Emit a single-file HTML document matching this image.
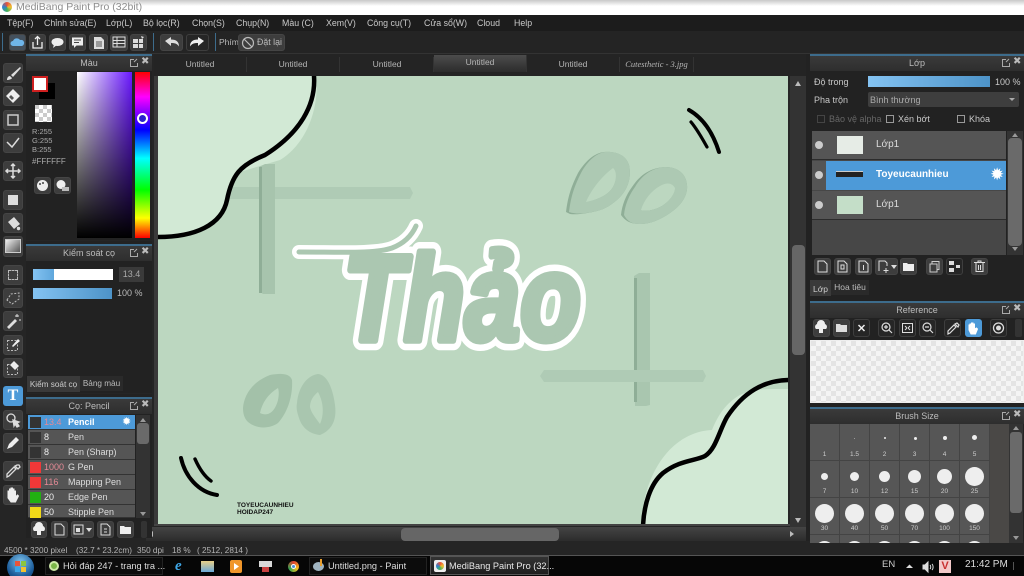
<!DOCTYPE html>
<html><head><meta charset="utf-8"><style>
html,body{margin:0;padding:0;width:1024px;height:576px;overflow:hidden;background:#252525}
body{font-family:"Liberation Sans","DejaVu Sans",sans-serif;font-size:9px;color:#c8c8c8;position:relative}
div,span{position:absolute;box-sizing:border-box;white-space:nowrap}
svg{position:absolute;overflow:visible}
.b{background:#3d3d3d;border:1px solid #454545;border-radius:3px}
.d{background:#262626;border:1px solid #3e3e3e;border-radius:3px}
.h{background:linear-gradient(#3a3a3a,#2e2e2e);border-top:2px solid #3d6c8c;text-align:center;color:#bcbcbc;font-size:9px;line-height:15px;height:17px}
.m{top:16px;font-size:8.8px;color:#c9c9c9;line-height:15px}
.t{top:57px;height:15px;line-height:15px;text-align:center;width:93px;font-size:8.5px;color:#b5b5b5;border-right:1px solid #333;background:#242424}
.r{left:28px;width:107px;height:15px;background:#555;border-bottom:1px solid #333;font-size:9px;line-height:15px;color:#ddd}
.s{left:2px;top:2px;width:11px;height:11px;background:#333}
.n{left:16px;color:#eee}.l{left:40px}
.c{width:30px;height:37px;background:#565656;border-right:1px solid #444;border-bottom:1px solid #444}
.c i{position:absolute;background:#eee;border-radius:50%}
.c b{position:absolute;left:0;width:29px;text-align:center;font-weight:normal;font-size:6.5px;bottom:2px;color:#ccc}
.x{font-size:10px;color:#bbb;font-weight:bold}
.st{top:546px;font-size:8.2px;line-height:10px;color:#b5b5b5}
</style></head><body>

<!-- title -->
<div style="left:0;top:0;width:1024px;height:15px;background:linear-gradient(#c8c8c8,#fff 6px)"></div>
<div style="left:2px;top:2px;width:10px;height:10px;border-radius:50%;background:conic-gradient(#e8503a,#f0c030,#40b060,#3080d0,#e8503a)"></div>
<div style="left:16px;top:1px;font-size:10.5px;line-height:13px;color:#8e8e8e;text-shadow:0 0 2px #fff">MediBang Paint Pro (32bit)</div>

<!-- menu -->
<div style="left:0;top:15px;width:1024px;height:16px;background:#1c1c1c"></div>
<span class="m" style="left:7px">Tệp(F)</span><span class="m" style="left:44px">Chỉnh sửa(E)</span><span class="m" style="left:106px">Lớp(L)</span><span class="m" style="left:143px">Bộ lọc(R)</span><span class="m" style="left:192px">Chọn(S)</span><span class="m" style="left:236px">Chụp(N)</span><span class="m" style="left:282px">Màu (C)</span><span class="m" style="left:326px">Xem(V)</span><span class="m" style="left:367px">Công cụ(T)</span><span class="m" style="left:424px">Cửa sổ(W)</span><span class="m" style="left:477px">Cloud</span><span class="m" style="left:514px">Help</span>

<!-- toolbar -->
<div style="left:0;top:31px;width:1024px;height:23px;background:#242424;border-bottom:1px solid #333"></div>
<div style="left:2px;top:33px;width:1px;height:18px;background:#3d6c8c"></div>
<div style="left:153px;top:33px;width:1px;height:18px;background:#3d6c8c"></div>
<div style="left:215px;top:33px;width:1px;height:18px;background:#3d6c8c"></div>
<div class="b" style="left:9px;top:34px;width:17px;height:17px;background:#44505c"></div>
<svg style="left:9px;top:34px" width="17" height="17"><path d="M4 12a2.500 2.500 0 0 1 0-5 4 4 0 0 1 7-1 3 3 0 0 1 2 6z" fill="#6fb6ea"/></svg>
<div class="b" style="left:29px;top:34px;width:17px;height:17px"></div>
<svg style="left:29px;top:34px" width="17" height="17" fill="none" stroke="#eee" stroke-width="1.300"><path d="M4 8v6h9V8M8.500 11V3M6 5l2.500-2.500L11 5"/></svg>
<div class="b" style="left:49px;top:34px;width:17px;height:17px"></div>
<svg style="left:49px;top:34px" width="17" height="17"><ellipse cx="8.500" cy="8" rx="6" ry="4" fill="#eee"/><path d="M5 10l-1 4 4-3z" fill="#eee"/></svg>
<div class="b" style="left:69px;top:34px;width:17px;height:17px"></div>
<svg style="left:69px;top:34px" width="17" height="17"><rect x="3" y="3.500" width="11" height="8" fill="#eee"/><path d="M5 11v3l3-3z" fill="#eee"/><path d="M5 6h7M5 8.500h5" stroke="#444"/></svg>
<div class="b" style="left:89px;top:34px;width:19px;height:17px"></div>
<svg style="left:89px;top:34px" width="19" height="17"><path d="M5 3h7l3 3v9H5z" fill="#ddd"/><path d="M7 8h6M7 10h6M7 12h6" stroke="#555"/></svg>
<div class="b" style="left:110px;top:34px;width:18px;height:17px"></div>
<svg style="left:110px;top:34px" width="18" height="17" fill="none" stroke="#ddd"><rect x="3" y="3" width="12" height="10"/><path d="M3 6.500h12M3 9.500h12M7 3v10"/></svg>
<div class="b" style="left:130px;top:34px;width:17px;height:17px"></div>
<svg style="left:130px;top:34px" width="17" height="17" fill="#ddd"><rect x="3" y="5" width="5" height="4"/><rect x="9" y="5" width="4" height="4"/><rect x="3" y="10" width="5" height="4"/><rect x="9" y="10" width="4" height="4"/><path d="M11 2l3 1-2 2z"/></svg>
<div class="b" style="left:160px;top:34px;width:23px;height:17px"></div>
<svg style="left:160px;top:34px" width="23" height="17"><path d="M5 7l6-4v2.500c5 0 8 2 8 7-2-3-4-3.500-8-3.500V12z" fill="#ddd"/></svg>
<div class="d" style="left:186px;top:34px;width:23px;height:17px"></div>
<svg style="left:186px;top:34px" width="23" height="17"><path d="M18 7l-6-4v2.500c-5 0-8 2-8 7 2-3 4-3.500 8-3.500V12z" fill="#eee"/></svg>
<span style="left:219px;top:35px;font-size:8.500px;line-height:14px;color:#bbb">Phím</span>
<div class="b" style="left:238px;top:34px;width:47px;height:17px"></div>
<svg style="left:241px;top:36px" width="14" height="14" fill="none" stroke="#bbb" stroke-width="1.200"><circle cx="7" cy="7" r="5.500"/><path d="M3 3l8 8"/></svg>
<span style="left:257px;top:35px;font-size:8.800px;line-height:14px;color:#bbb">Đặt lại</span>

<!-- doc tabs -->
<div style="left:154px;top:54px;width:656px;height:22px;background:#242424"></div>
<div class="t" style="left:154px">Untitled</div><div class="t" style="left:247px">Untitled</div><div class="t" style="left:341px">Untitled</div>
<div class="t" style="left:434px;top:55px;height:17px;background:linear-gradient(#4c4c4c,#2c2c2c)">Untitled</div>
<div class="t" style="left:527px">Untitled</div>
<div class="t" style="left:620px;width:74px;font-family:'Liberation Serif',serif;font-style:italic">Cutesthetic - 3.jpg</div>

<!-- canvas -->
<svg style="left:158px;top:76px;overflow:hidden" width="630" height="448" viewBox="158 76 630 448">
<rect x="158" y="76" width="630" height="448" fill="#bcd7c0"/>
<path d="M158 76H316C320 110 305 145 280 160L240 172C230 180 228 195 226 210 218 230 190 238 158 238Z" fill="#d2e9d5"/>
<path d="M642 524C642 480 668 432 712 430 718 415 726 403 740 395 755 388 770 389 788 389V524Z" fill="#d2e9d5"/>
<path d="M228 187h182l3 6-3 6H228z" fill="#afcbb5"/>
<path d="M259 167l6-3h10v130h-12l-4-3z" fill="#a7c4ad"/>
<rect x="259" y="167" width="3" height="126" fill="#8fae97"/>
<path d="M634 276l5-3h11v132l-4 1h-11z" fill="#a9c6af"/>
<rect x="634" y="278" width="3" height="124" fill="#8fae97"/>
<path d="M540 376l4-6h159l3 6-3 6H544z" fill="#afcbb5"/>
<g fill-rule="evenodd">
<path d="M566 212C568 195 572 185 578 173 586 160 595 153 604 152 616 151 626 155 629 165 632 178 627 190 620 197 612 205 605 209 597 211 588 213 578 215 570 214Z M585 203C596 200 606 196 611 190 616 184 619 172 613 167 602 175 590 190 585 203Z" fill="#8fae97"/>
<path d="M569 212C571 195 575 185 581 173 588 160 597 153 605 152 616 151 626 155 629 165 632 178 627 190 620 197 612 205 605 209 597 211 588 213 578 215 569 212Z M586 202C596 200 606 196 611 190 616 184 618 172 613 168 602 176 591 190 586 202Z" fill="#adc9b3"/>
<path d="M621 215C622 205 626 195 632 187 640 175 650 168 665 167 677 167 686 173 687 185 688 195 682 205 670 213 660 220 650 224 640 224 632 224 626 222 621 215Z M640 210C646 212 655 210 662 206 670 201 676 193 675 187 672 182 667 181 660 185 650 190 643 200 640 210Z" fill="#8fae97"/>
<path d="M624 215C625 205 629 195 635 187 642 175 652 168 665 167 677 167 686 173 687 185 688 195 682 205 670 213 660 220 650 224 640 224 632 224 628 222 624 215Z M641 210C646 212 655 210 662 206 670 201 675 193 675 188 672 183 667 182 660 186 651 191 644 200 641 210Z" fill="#adc9b3"/>
<path d="M243 408C244 395 252 382 270 375 280 373 290 373 292 380 293 395 288 412 278 423 268 430 255 428 248 422 244 418 243 413 243 408Z M260 413C268 417 275 412 278 400 279 395 279 391 278 388 268 394 262 403 260 413Z" fill="#a3c1a9"/>
<path d="M297 403C298 390 305 376 318 374 328 375 333 390 335 405 337 420 332 430 320 435 310 434 302 428 299 418 297 412 296 408 297 403Z M310 407C311 412 314 416 320 424 324 415 324 403 318 392 313 396 310 401 310 407Z" fill="#a9c6af"/>
</g>
<g fill="none" stroke="#000" stroke-linecap="round">
<path d="M314 76C316 105 300 133 265 155 240 165 232 175 227 200 222 225 195 237 158 237" stroke-width="4.500"/>
<path d="M790 380C763 380 743 393 727 417 719 431 716 449 705 456 695 461 680 460 663 473 650 484 644 505 643 526" stroke-width="4.500"/>
<path d="M689 110C703 118 713 133 719 152" stroke-width="4"/>
<path d="M691 122C697 129 702 138 707 147" stroke-width="3.200"/>
<path d="M181 458C185 476 198 492 217 495" stroke-width="4"/>
<path d="M195 459C199 468 204 476 211 481" stroke-width="3.400"/>
</g>
<g font-family="Liberation Sans,sans-serif" font-style="italic" font-weight="bold" font-size="122" stroke-linejoin="round">
<path d="M299 252C340 252 375 254 392 248 405 243 412 235 416 226" fill="none" stroke="#fff" stroke-width="14" stroke-linecap="round"/>
<text x="343" y="340" textLength="238" lengthAdjust="spacingAndGlyphs" fill="#fff" stroke="#fff" stroke-width="20">Thảo</text>
<text x="343" y="340" textLength="238" lengthAdjust="spacingAndGlyphs" fill="#abc7b1" stroke="#abc7b1" stroke-width="7">Thảo</text>
<path d="M299 252C340 252 375 254 392 248 405 243 412 235 416 226" fill="none" stroke="#abc7b1" stroke-width="5" stroke-linecap="round"/>
</g>
<text x="237" y="507" font-family="Liberation Sans,sans-serif" font-weight="bold" font-size="6.500" fill="#111">TOYEUCAUNHIEU</text>
<text x="237" y="514" font-family="Liberation Sans,sans-serif" font-weight="bold" font-size="6.500" fill="#111">HOIDAP247</text>
</svg>
<div style="left:154px;top:76px;width:4px;height:448px;background:#3a3a3a"></div>
<div style="left:154px;top:524px;width:640px;height:2px;background:#444"></div>

<!-- scrollbars -->
<div style="left:790px;top:76px;width:16px;height:452px;background:#333"></div>
<div style="left:792px;top:245px;width:13px;height:110px;background:#666;border-radius:4px"></div>
<svg style="left:792px;top:78px" width="12" height="450" fill="#bbb"><path d="M3 8l3-5 3 5zM3 440l3 5 3-5z"/></svg>
<div style="left:146px;top:527px;width:660px;height:14px;background:linear-gradient(#444,#2c2c2c)"></div>
<div style="left:401px;top:528px;width:158px;height:13px;background:#666;border-radius:4px"></div>
<svg style="left:148px;top:529px" width="650" height="10" fill="#bbb"><path d="M5 2l-4 3 4 3zM642 2l4 3-4 3z"/></svg>

<!-- left tool column -->
<div style="left:0;top:54px;width:26px;height:484px;background:#252525"></div>
<div class="b" style="left:3px;top:63px;width:20px;height:20px"></div><svg style="left:3px;top:63px" width="20" height="20"><path d="M17 4L8 12l2 2 8-9zM7 13c-2 0-3 2-3 4 2 0 5-1 5-2z" fill="#ddd"/></svg>
<div class="b" style="left:3px;top:86px;width:20px;height:20px"></div><svg style="left:3px;top:86px" width="20" height="20"><path d="M10 3l7 7-7 7-7-7z" fill="#eee"/><path d="M8 9l3 3-2 2-3-3z" fill="#555"/></svg>
<div class="b" style="left:3px;top:110px;width:20px;height:20px"></div><svg style="left:3px;top:110px" width="20" height="20" fill="none" stroke="#ccc" stroke-width="1.500"><rect x="5" y="5" width="10" height="10"/></svg>
<div class="b" style="left:3px;top:133px;width:20px;height:20px"></div><svg style="left:3px;top:133px" width="20" height="20" fill="none" stroke="#ddd" stroke-width="1.500"><path d="M4 9l5 5 7-9"/></svg>
<div class="b" style="left:3px;top:161px;width:20px;height:20px"></div><svg style="left:3px;top:161px" width="20" height="20" fill="none" stroke="#ddd" stroke-width="1.500"><path d="M10 3v14M3 10h14M8 5l2-2 2 2M8 15l2 2 2-2M5 8l-2 2 2 2M15 8l2 2-2 2"/></svg>
<div class="b" style="left:3px;top:190px;width:20px;height:20px"></div><div style="left:8px;top:195px;width:10px;height:10px;background:#ddd"></div>
<div class="b" style="left:3px;top:213px;width:20px;height:20px"></div><svg style="left:3px;top:213px" width="20" height="20"><path d="M5 9l6-5 6 7-6 5z" fill="#ddd"/><circle cx="15.500" cy="15.500" r="1.700" fill="#ddd"/></svg>
<div class="b" style="left:3px;top:236px;width:20px;height:21px"></div><div style="left:5px;top:239px;width:16px;height:14px;background:linear-gradient(135deg,#eee,#555);border:1px solid #ccc"></div>
<div class="b" style="left:3px;top:265px;width:20px;height:20px"></div><div style="left:8px;top:270px;width:10px;height:10px;border:1px dashed #bbb"></div>
<div class="b" style="left:3px;top:288px;width:20px;height:20px"></div><svg style="left:3px;top:288px" width="20" height="20" fill="none" stroke="#bbb" stroke-dasharray="2 1.500"><path d="M4 12l4-6 8-1 0 6-7 5z"/></svg>
<div class="b" style="left:3px;top:311px;width:20px;height:20px"></div><svg style="left:3px;top:311px" width="20" height="20"><path d="M4 16l8-8 2 2-8 8z" fill="#ddd"/><path d="M14 3v3M12 5h4M17 8v2" stroke="#ddd"/></svg>
<div class="b" style="left:3px;top:335px;width:20px;height:20px"></div><svg style="left:3px;top:335px" width="20" height="20"><rect x="4.500" y="5.500" width="10" height="10" fill="none" stroke="#bbb" stroke-dasharray="2 1.500"/><path d="M9 11l6-7 2 2-7 6z" fill="#eee"/></svg>
<div class="b" style="left:3px;top:358px;width:20px;height:20px"></div><svg style="left:3px;top:358px" width="20" height="20"><rect x="4.500" y="6.500" width="10" height="10" fill="none" stroke="#bbb" stroke-dasharray="2 1.500"/><path d="M11 3l5 5-4 4-5-5z" fill="#eee"/></svg>
<div style="left:3px;top:386px;width:20px;height:20px;background:#4d9ad8;border-radius:3px;text-align:center;color:#fff;font:bold 16px/20px 'Liberation Serif',serif">T</div>
<div class="b" style="left:3px;top:410px;width:20px;height:20px"></div><svg style="left:3px;top:410px" width="20" height="20" fill="none" stroke="#ddd" stroke-width="1.300"><circle cx="8" cy="8" r="4"/><path d="M10 10l6 2-2 1 2 3-2 1-2-3-1 2z" fill="#ddd"/></svg>
<div class="b" style="left:3px;top:433px;width:20px;height:20px"></div><svg style="left:3px;top:433px" width="20" height="20"><path d="M4 16l2-5 7-7 3 3-7 7z" fill="#eee"/></svg>
<div class="b" style="left:3px;top:461px;width:20px;height:20px"></div><svg style="left:3px;top:461px" width="20" height="20"><path d="M4 16l2-1 7-7-2-2-7 7zM12 5l3 3 2-2-1-2-2 0z" fill="none" stroke="#ddd" stroke-width="1.300"/></svg>
<div class="b" style="left:3px;top:485px;width:20px;height:20px"></div><svg style="left:3px;top:485px" width="20" height="20"><path d="M5 10V6h1.500v4-6H8v5-6h1.500v6-5H11v6V6h1.500v6l2-2 1 1-3 6H8l-3-4z" fill="#eee" stroke="#eee"/></svg>

<!-- colour panel -->
<div style="left:26px;top:54px;width:126px;height:186px;background:#222"></div>
<div class="h" style="left:26px;top:54px;width:126px">Màu</div>
<svg style="left:129px;top:58px" width="9" height="9" fill="none" stroke="#aaa"><path d="M5 1.500H1.500v7h7V5M5 4l3-3"/></svg><span class="x" style="left:141px;top:56px">✖</span>
<div style="left:39px;top:83px;width:16px;height:16px;background:#000"></div>
<div style="left:32px;top:76px;width:16px;height:16px;background:#fff;border:2px solid #d02020"></div>
<div style="left:35px;top:105px;width:17px;height:17px;background:conic-gradient(#fff 25%,#ccc 0 50%,#fff 0 75%,#ccc 0);background-size:8px 8px"></div>
<span style="left:32px;top:127px;font-size:7.500px;line-height:9px;color:#aaa;white-space:pre">R:255
G:255
B:255</span>
<span style="left:32px;top:157px;font-size:8px;line-height:10px;color:#aaa">#FFFFFF</span>
<div class="b" style="left:34px;top:177px;width:17px;height:17px"></div><svg style="left:34px;top:177px" width="17" height="17"><circle cx="8.500" cy="8.500" r="5.500" fill="#eee"/><circle cx="6" cy="7" r="1" fill="#444"/><circle cx="9" cy="6" r="1" fill="#444"/></svg>
<div class="b" style="left:54px;top:177px;width:17px;height:17px"></div><svg style="left:54px;top:177px" width="17" height="17"><circle cx="7" cy="7.500" r="4.500" fill="#eee"/><rect x="8" y="10" width="7" height="4" fill="#bbb"/></svg>
<div style="left:77px;top:72px;width:55px;height:166px;background:linear-gradient(transparent,#000),linear-gradient(90deg,#fff,#6a18ff)"></div>
<div style="left:135px;top:72px;width:15px;height:166px;background:linear-gradient(#f00,#f0f 15%,#00f 35%,#0ff 52%,#0f0 71%,#ff0 88%,#f00)"></div>
<div style="left:137px;top:113px;width:11px;height:11px;border-radius:50%;border:2px solid #fff;background:#2a20d0"></div>

<!-- brush control -->
<div style="left:26px;top:241px;width:126px;height:152px;background:#222"></div>
<div class="h" style="left:26px;top:244px;width:126px">Kiểm soát cọ</div>
<svg style="left:129px;top:248px" width="9" height="9" fill="none" stroke="#aaa"><path d="M5 1.500H1.500v7h7V5M5 4l3-3"/></svg><span class="x" style="left:141px;top:246px">✖</span>
<div style="left:33px;top:269px;width:80px;height:11px;background:#fff"></div>
<div style="left:33px;top:269px;width:21px;height:11px;background:linear-gradient(90deg,#84c3f2,#5fa7dc)"></div>
<div style="left:119px;top:267px;width:25px;height:15px;background:#3a3a3a;text-align:center;line-height:15px;font-size:9px;color:#aaa">13.4</div>
<div style="left:33px;top:288px;width:79px;height:11px;background:linear-gradient(90deg,#84c3f2,#4d93c8)"></div>
<span style="left:117px;top:288px;font-size:9px;line-height:11px;color:#bbb">100 %</span>
<div style="left:27px;top:376px;width:53px;height:16px;background:#3a3a3a;text-align:center;font-size:8.200px;line-height:18px;color:#ccc">Kiểm soát cọ</div>
<div style="left:80px;top:376px;width:43px;height:15px;background:#2a2a2a;text-align:center;font-size:8.200px;line-height:15px;color:#bbb">Bảng màu</div>

<!-- brush panel -->
<div style="left:26px;top:394px;width:126px;height:144px;background:#222"></div>
<div class="h" style="left:26px;top:397px;width:126px">Cọ: Pencil</div>
<svg style="left:129px;top:401px" width="9" height="9" fill="none" stroke="#aaa"><path d="M5 1.500H1.500v7h7V5M5 4l3-3"/></svg><span class="x" style="left:141px;top:399px">✖</span>
<div class="r" style="top:415px;background:#4d9ad8"><div class="s"></div><span class="n" style="color:#e58a96">13.4</span><span class="l" style="color:#fff;font-weight:bold">Pencil</span><span style="left:94px;top:0;color:#fff;font-size:11px">✹</span></div>
<div class="r" style="top:430px"><div class="s"></div><span class="n">8</span><span class="l">Pen</span></div>
<div class="r" style="top:445px"><div class="s"></div><span class="n">8</span><span class="l">Pen (Sharp)</span></div>
<div class="r" style="top:460px"><div class="s" style="background:#f03838"></div><span class="n" style="color:#e58a96">1000</span><span class="l">G Pen</span></div>
<div class="r" style="top:475px"><div class="s" style="background:#f03838"></div><span class="n" style="color:#e58a96">116</span><span class="l">Mapping Pen</span></div>
<div class="r" style="top:490px"><div class="s" style="background:#22b012"></div><span class="n">20</span><span class="l">Edge Pen</span></div>
<div class="r" style="top:505px;height:13px"><div class="s" style="background:#f0d818"></div><span class="n">50</span><span class="l">Stipple Pen</span></div>
<div style="left:136px;top:415px;width:14px;height:103px;background:#333"></div>
<div style="left:137px;top:423px;width:12px;height:21px;background:#6a6a6a;border-radius:3px"></div>
<svg style="left:138px;top:416px" width="10" height="102" fill="#999"><path d="M2 6l3-4 3 4zM2 96l3 4 3-4z"/></svg>
<div class="b" style="left:31px;top:521px;width:16px;height:17px"></div><svg style="left:31px;top:521px" width="16" height="17"><path d="M3 10a3 3 0 0 1 1-5 4 4 0 0 1 8 0 3 3 0 0 1 1 5H10v4H6v-4z" fill="#eee"/></svg>
<div class="b" style="left:51px;top:521px;width:17px;height:17px"></div><svg style="left:51px;top:521px" width="17" height="17" fill="none" stroke="#ddd"><path d="M4 3h6l3 3v8H4z"/></svg>
<div class="b" style="left:71px;top:521px;width:23px;height:17px"></div><svg style="left:71px;top:521px" width="23" height="17"><rect x="3" y="4" width="9" height="9" fill="none" stroke="#ddd"/><rect x="5" y="7" width="4" height="4" fill="#ddd"/><path d="M15 7l3 4 3-4z" fill="#ddd"/></svg>
<div class="b" style="left:97px;top:521px;width:17px;height:17px"></div><svg style="left:97px;top:521px" width="17" height="17" fill="none" stroke="#ddd"><path d="M4 3h6l3 3v8H4zM7 8h3M7 11h3"/></svg>
<div class="b" style="left:117px;top:521px;width:17px;height:17px"></div><svg style="left:117px;top:521px" width="17" height="17"><path d="M3 5h4l1 1h6v7H3z" fill="#eee"/></svg>
<div style="left:141px;top:521px;width:6px;height:17px;background:#333;border-radius:2px"></div>

<!-- status -->
<div style="left:0;top:541px;width:1024px;height:15px;background:#252525;border-bottom:1px solid #555"></div>
<span class="st" style="left:4px">4500 * 3200 pixel</span><span class="st" style="left:76px">(32.7 * 23.2cm)</span><span class="st" style="left:137px">350 dpi</span><span class="st" style="left:172px">18 %</span><span class="st" style="left:197px">( 2512, 2814 )</span>

<!-- right: layer -->
<div style="left:806px;top:54px;width:218px;height:487px;background:#222"></div>
<div class="h" style="left:810px;top:54px;width:214px">Lớp</div>
<svg style="left:1001px;top:58px" width="9" height="9" fill="none" stroke="#aaa"><path d="M5 1.500H1.500v7h7V5M5 4l3-3"/></svg><span class="x" style="left:1013px;top:56px">✖</span>
<span style="left:814px;top:77px;font-size:9px;line-height:11px">Độ trong</span>
<div style="left:868px;top:76px;width:122px;height:11px;background:linear-gradient(90deg,#84c3f2,#4d93c8)"></div>
<span style="left:995px;top:77px;font-size:9px;line-height:11px">100 %</span>
<span style="left:814px;top:95px;font-size:9px;line-height:11px">Pha trộn</span>
<div style="left:868px;top:92px;width:151px;height:15px;background:#3e3e3e;border-radius:2px;font-size:9px;line-height:16px;padding-left:2px;color:#aaa">Bình thường</div>
<svg style="left:1009px;top:98px" width="6" height="4" fill="#aaa"><path d="M0 0h6l-3 3z"/></svg>
<div style="left:817px;top:115px;width:8px;height:8px;border:1px solid #444"></div><span style="left:829px;top:114px;font-size:9px;line-height:11px;color:#666">Bảo vệ alpha</span>
<div style="left:886px;top:115px;width:8px;height:8px;border:1px solid #999"></div><span style="left:898px;top:114px;font-size:9px;line-height:11px">Xén bớt</span>
<div style="left:957px;top:115px;width:8px;height:8px;border:1px solid #999"></div><span style="left:969px;top:114px;font-size:9px;line-height:11px">Khóa</span>
<div style="left:812px;top:131px;width:194px;height:124px;background:#474747"></div>
<div style="left:812px;top:131px;width:194px;height:29px;background:#555;border-bottom:1px solid #2c2c2c"></div>
<div style="left:812px;top:161px;width:14px;height:29px;background:#555"></div>
<div style="left:826px;top:161px;width:180px;height:29px;background:#4d9ad8"></div>
<div style="left:812px;top:191px;width:194px;height:29px;background:#555;border-bottom:1px solid #2c2c2c"></div>
<div style="left:815px;top:141px;width:8px;height:8px;border-radius:50%;background:#ccc"></div>
<div style="left:815px;top:171px;width:8px;height:8px;border-radius:50%;background:#ccc"></div>
<div style="left:815px;top:201px;width:8px;height:8px;border-radius:50%;background:#ccc"></div>
<div style="left:837px;top:136px;width:26px;height:18px;background:#e6ece6"></div>
<div style="left:836px;top:171px;width:27px;height:6px;background:#222;border-top:1px solid #ccc"></div>
<div style="left:837px;top:196px;width:26px;height:18px;background:#c4dec8"></div>
<span style="left:876px;top:139px;font-size:10px;line-height:12px;color:#ddd">Lớp1</span>
<span style="left:876px;top:169px;font-size:10px;line-height:12px;color:#fff;font-weight:bold">Toyeucaunhieu</span>
<span style="left:990px;top:166px;font-size:17px;line-height:18px;color:#fff">✹</span>
<span style="left:876px;top:199px;font-size:10px;line-height:12px;color:#ddd">Lớp1</span>
<div style="left:1007px;top:131px;width:16px;height:124px;background:#333"></div>
<div style="left:1008px;top:138px;width:14px;height:108px;background:#6a6a6a;border-radius:4px"></div>
<svg style="left:1011px;top:132px" width="9" height="122" fill="#999"><path d="M1 5l3-4 3 4zM1 115l3 4 3-4z"/></svg>
<div class="b" style="left:814px;top:258px;width:17px;height:17px"></div><svg style="left:814px;top:258px" width="17" height="17" fill="none" stroke="#ddd"><path d="M4 3h6l3 3v8H4z"/></svg>
<div class="b" style="left:834px;top:258px;width:17px;height:17px"></div><svg style="left:834px;top:258px" width="17" height="17" fill="none" stroke="#ddd"><path d="M4 3h6l3 3v8H4zM7 7h3v4H7z"/></svg>
<div class="b" style="left:855px;top:258px;width:17px;height:17px"></div><svg style="left:855px;top:258px" width="17" height="17" fill="none" stroke="#ddd"><path d="M4 3h6l3 3v8H4zM8.500 7v5"/></svg>
<div class="b" style="left:875px;top:258px;width:23px;height:17px"></div><svg style="left:875px;top:258px" width="23" height="17"><path d="M4 13V3h6l2 2v3M11 10v5M8.500 12.500h5" fill="none" stroke="#ddd"/><path d="M16 7l3 4 3-4z" fill="#ddd"/></svg>
<div class="b" style="left:900px;top:258px;width:17px;height:17px"></div><svg style="left:900px;top:258px" width="17" height="17"><path d="M3 5h4l1 1h6v7H3z" fill="#eee"/></svg>
<div class="b" style="left:926px;top:258px;width:17px;height:17px"></div><svg style="left:926px;top:258px" width="17" height="17" fill="none" stroke="#ccc"><rect x="6" y="3.500" width="7" height="8"/><rect x="4" y="6" width="7" height="8" fill="#3d3d3d"/></svg>
<div class="d" style="left:946px;top:258px;width:17px;height:17px"></div><svg style="left:946px;top:258px" width="17" height="17"><rect x="3" y="3" width="5" height="4" fill="#ddd"/><rect x="3" y="10" width="5" height="4" fill="#ddd"/><rect x="10" y="7" width="4" height="3" fill="#ddd"/></svg>
<div class="b" style="left:971px;top:258px;width:17px;height:17px"></div><svg style="left:971px;top:258px" width="17" height="17" fill="none" stroke="#ddd"><path d="M3 4.500h11M5 4.500v9h7v-9M7.500 7v5M9.500 7v5M7 4V3h3v1"/></svg>
<div style="left:810px;top:280px;width:21px;height:16px;background:#3a3a3a;text-align:center;font-size:8.500px;line-height:18px;color:#ccc">Lớp</div>
<div style="left:831px;top:280px;width:38px;height:15px;background:#2a2a2a;text-align:center;font-size:8.500px;line-height:15px;color:#bbb">Hoa tiêu</div>

<!-- reference -->
<div class="h" style="left:810px;top:301px;width:214px">Reference</div>
<svg style="left:1001px;top:305px" width="9" height="9" fill="none" stroke="#aaa"><path d="M5 1.500H1.500v7h7V5M5 4l3-3"/></svg><span class="x" style="left:1013px;top:303px">✖</span>
<div class="b" style="left:813px;top:319px;width:17px;height:18px"></div><svg style="left:813px;top:319px" width="17" height="18"><path d="M3 10a3 3 0 0 1 1-5 4 4 0 0 1 8 0 3 3 0 0 1 1 5H10v4H6v-4z" fill="#eee"/></svg>
<div class="b" style="left:833px;top:319px;width:17px;height:18px"></div><svg style="left:833px;top:319px" width="17" height="18"><path d="M3 5h4l1 1h6v7H3z" fill="#ddd"/></svg>
<div class="d" style="left:853px;top:319px;width:17px;height:18px"></div><svg style="left:853px;top:319px" width="17" height="18" stroke="#eee" stroke-width="1.500"><path d="M5.500 6l6 6M11.500 6l-6 6"/></svg>
<div class="d" style="left:878px;top:319px;width:17px;height:18px"></div><svg style="left:878px;top:319px" width="17" height="18" fill="none" stroke="#ddd" stroke-width="1.200"><circle cx="8" cy="8" r="4"/><path d="M11 11l3 3M6 8h4M8 6v4"/></svg>
<div class="d" style="left:899px;top:319px;width:17px;height:18px"></div><svg style="left:899px;top:319px" width="17" height="18" fill="none" stroke="#ddd"><rect x="3.500" y="4.500" width="10" height="9"/><path d="M6 7l2 2M11 7L9 9M6 11l2-2M11 11L9 9"/></svg>
<div class="d" style="left:919px;top:319px;width:17px;height:18px"></div><svg style="left:919px;top:319px" width="17" height="18" fill="none" stroke="#ddd" stroke-width="1.200"><circle cx="8" cy="8" r="4"/><path d="M11 11l3 3M6 8h4"/></svg>
<div class="d" style="left:944px;top:319px;width:17px;height:18px"></div><svg style="left:944px;top:319px" width="17" height="18"><path d="M4 15l2-1 6-6-2-2-6 6zM11 5l3 3 1-2-2-2z" fill="none" stroke="#ddd" stroke-width="1.200"/></svg>
<div style="left:965px;top:319px;width:17px;height:18px;background:#4d9ad8;border-radius:3px"></div><svg style="left:965px;top:319px" width="17" height="18"><path d="M4 9V6h1v3-4h1.500v4V4H8v5V5h1.500v5l2-1 1 1-2 5H6l-2-4z" fill="#fff" stroke="#fff"/></svg>
<div class="d" style="left:990px;top:319px;width:17px;height:18px"></div><svg style="left:990px;top:319px" width="17" height="18"><circle cx="8.500" cy="9" r="5" fill="none" stroke="#ddd" stroke-width="1.300"/><circle cx="8.500" cy="9" r="2.500" fill="#ddd"/></svg>
<div style="left:1015px;top:319px;width:7px;height:18px;background:#333;border-radius:2px"></div>
<div style="left:810px;top:340px;width:214px;height:63px;background:conic-gradient(#f4f4f4 25%,#e4e4e4 0 50%,#f4f4f4 0 75%,#e4e4e4 0);background-size:10px 10px;border:1px solid #eee"></div>

<!-- brush size -->
<div class="h" style="left:810px;top:407px;width:214px">Brush Size</div>
<svg style="left:1001px;top:411px" width="9" height="9" fill="none" stroke="#aaa"><path d="M5 1.500H1.500v7h7V5M5 4l3-3"/></svg><span class="x" style="left:1013px;top:409px">✖</span>
<div style="left:810px;top:424px;width:200px;height:119px;background:#4a4846"></div>
<div style="left:810px;top:424px;width:180px;height:119px;overflow:hidden;background:#565656">
<div class="c" style="left:0;top:0"><b>1</b></div>
<div class="c" style="left:30px;top:0"><i style="left:14px;top:14px;width:1px;height:1px;opacity:.6"></i><b>1.5</b></div>
<div class="c" style="left:60px;top:0"><i style="left:14px;top:13px;width:2px;height:2px"></i><b>2</b></div>
<div class="c" style="left:90px;top:0"><i style="left:14px;top:13px;width:3px;height:3px"></i><b>3</b></div>
<div class="c" style="left:120px;top:0"><i style="left:13px;top:12px;width:4px;height:4px"></i><b>4</b></div>
<div class="c" style="left:150px;top:0"><i style="left:12px;top:11px;width:5px;height:5px"></i><b>5</b></div>
<div class="c" style="left:0;top:37px"><i style="left:11px;top:12px;width:7px;height:7px"></i><b>7</b></div>
<div class="c" style="left:30px;top:37px"><i style="left:10px;top:11px;width:9px;height:9px"></i><b>10</b></div>
<div class="c" style="left:60px;top:37px"><i style="left:9px;top:10px;width:11px;height:11px"></i><b>12</b></div>
<div class="c" style="left:90px;top:37px"><i style="left:8px;top:9px;width:13px;height:13px"></i><b>15</b></div>
<div class="c" style="left:120px;top:37px"><i style="left:7px;top:8px;width:15px;height:15px"></i><b>20</b></div>
<div class="c" style="left:150px;top:37px"><i style="left:5px;top:6px;width:19px;height:19px"></i><b>25</b></div>
<div class="c" style="left:0;top:74px"><i style="left:5px;top:6px;width:19px;height:19px"></i><b>30</b></div>
<div class="c" style="left:30px;top:74px"><i style="left:5px;top:6px;width:19px;height:19px"></i><b>40</b></div>
<div class="c" style="left:60px;top:74px"><i style="left:5px;top:6px;width:19px;height:19px"></i><b>50</b></div>
<div class="c" style="left:90px;top:74px"><i style="left:5px;top:6px;width:19px;height:19px"></i><b>70</b></div>
<div class="c" style="left:120px;top:74px"><i style="left:5px;top:6px;width:19px;height:19px"></i><b>100</b></div>
<div class="c" style="left:150px;top:74px"><i style="left:5px;top:6px;width:19px;height:19px"></i><b>150</b></div>
<div class="c" style="left:0;top:111px"><i style="left:5px;top:6px;width:19px;height:19px"></i></div>
<div class="c" style="left:30px;top:111px"><i style="left:5px;top:6px;width:19px;height:19px"></i></div>
<div class="c" style="left:60px;top:111px"><i style="left:5px;top:6px;width:19px;height:19px"></i></div>
<div class="c" style="left:90px;top:111px"><i style="left:5px;top:6px;width:19px;height:19px"></i></div>
<div class="c" style="left:120px;top:111px"><i style="left:5px;top:6px;width:19px;height:19px"></i></div>
<div class="c" style="left:150px;top:111px"><i style="left:5px;top:6px;width:19px;height:19px"></i></div>
</div>
<div style="left:1009px;top:424px;width:14px;height:119px;background:#333"></div>
<div style="left:1010px;top:432px;width:12px;height:81px;background:#6a6a6a;border-radius:3px"></div>
<svg style="left:1012px;top:425px" width="9" height="118" fill="#999"><path d="M1 5l3-4 3 4zM1 111l3 4 3-4z"/></svg>

<!-- taskbar -->
<div style="left:0;top:556px;width:1024px;height:20px;background:#060606"></div>
<div style="left:7px;top:554px;width:27px;height:27px;border-radius:50%;background:radial-gradient(circle at 50% 30%,#7fc3ec,#1d5d9a 60%,#0d2e55)"></div>
<svg style="left:14px;top:560px" width="13" height="13"><rect x="1" y="1" width="5" height="5" fill="#e8553a"/><rect x="7" y="1" width="5" height="5" fill="#8cc63f"/><rect x="1" y="7" width="5" height="5" fill="#3aa5e8"/><rect x="7" y="7" width="5" height="5" fill="#f5c22e"/></svg>
<div style="left:45px;top:557px;width:118px;height:18px;border:1px solid #222;background:#0c0c0c"></div>
<div style="left:49px;top:561px;width:10px;height:10px;border-radius:50%;background:#7ab648;border:2px solid #cde8a8"></div>
<span style="left:63px;top:560px;font-size:9.200px;line-height:12px;color:#ddd">Hỏi đáp 247 - trang tra ...</span>
<div style="left:175px;top:559px;font:italic bold 15px/15px 'Liberation Serif',serif;color:#3fa8e8">e</div>
<div style="left:201px;top:561px;width:13px;height:11px;background:linear-gradient(#e8d088,#6aa8d8)"></div>
<div style="left:230px;top:560px;width:12px;height:13px;background:#f0962a;border-radius:2px"></div>
<svg style="left:233px;top:563px" width="7" height="7"><path d="M1 0l5 3.500L1 7z" fill="#fff"/></svg>
<div style="left:259px;top:561px;width:13px;height:6px;background:#d8d8d8"></div><div style="left:262px;top:567px;width:7px;height:5px;background:#c84040"></div>
<div style="left:288px;top:561px;width:11px;height:11px;border-radius:50%;background:conic-gradient(#e04030,#f0c020,#30a050,#e04030);border:0"></div>
<div style="left:291px;top:564px;width:5px;height:5px;border-radius:50%;background:#4a90d8;border:1px solid #fff"></div>
<div style="left:309px;top:557px;width:118px;height:18px;border:1px solid #222;background:#0c0c0c"></div>
<div style="left:313px;top:562px;width:11px;height:9px;border-radius:50%;background:#a0b4c0"></div><div style="left:320px;top:559px;width:2px;height:7px;background:#e8a030"></div>
<span style="left:328px;top:560px;font-size:9.200px;line-height:12px;color:#ddd">Untitled.png - Paint</span>
<div style="left:430px;top:556px;width:119px;height:19px;border:1px solid #555;background:linear-gradient(#333,#1e1e1e)"></div>
<div style="left:434px;top:560px;width:12px;height:12px;background:#eee;border-radius:2px"></div><div style="left:436px;top:562px;width:8px;height:8px;border-radius:50%;background:conic-gradient(#e8503a,#f0c030,#40b060,#3080d0,#e8503a)"></div>
<span style="left:449px;top:560px;font-size:9.200px;line-height:12px;color:#e8e8e8">MediBang Paint Pro (32...</span>
<span style="left:882px;top:559px;font-size:9.500px;line-height:12px;color:#ccc">EN</span>
<svg style="left:906px;top:564px" width="7" height="5" fill="#ddd"><path d="M0 4l3.500-3.500L7 4z"/></svg>
<svg style="left:922px;top:561px" width="13" height="12" fill="none" stroke="#ddd"><path d="M1 4h2l3-3v10L3 8H1z" fill="#ddd"/><path d="M8 4c1 1 1 3 0 4M10 3c1.500 1.500 1.500 4.500 0 6"/></svg>
<div style="left:939px;top:560px;width:12px;height:13px;background:#f3c9c9;color:#c83030;font:bold 11px/13px 'Liberation Sans',sans-serif;text-align:center">V</div>
<span style="left:965px;top:559px;font-size:10px;line-height:12px;color:#ddd">21:42 PM</span>
<div style="left:1013px;top:562px;width:1px;height:8px;background:#555"></div>
</body></html>
